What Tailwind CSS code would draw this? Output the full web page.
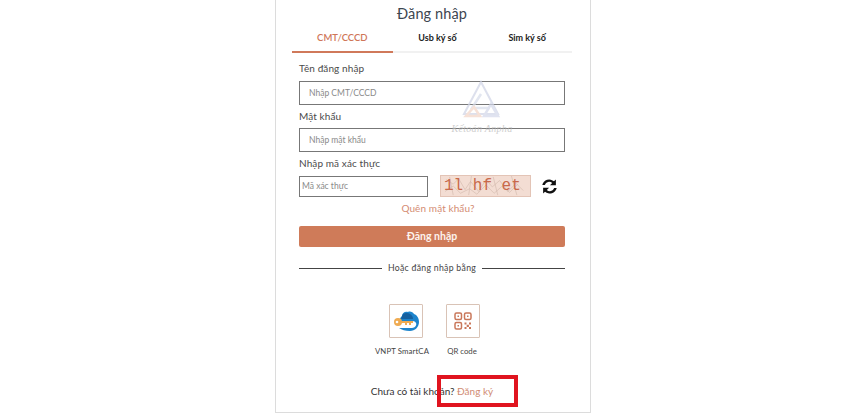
<!doctype html>
<html><head><meta charset="utf-8"><script src="https://cdn.jsdelivr.net/npm/@tailwindcss/browser@4"></script></head>
<body class="bg-white h-[417px] w-[850px] overflow-hidden font-['Lato','Noto_Sans',sans-serif]">
<div class="relative ml-[275px] w-[316px] h-[413px] border-x border-b border-[#dcdcdc] pl-[23px] pr-[25px] text-[#444]">
  <h1 class="h-[29px] pt-[2px] text-center text-[14.5px] leading-[24px] text-[#3d4650] tracking-[.1px]">Đăng nhập</h1>
  <div class="-mx-[7px] flex h-[24px] border-b-2 border-[#f1f1f1] text-[9px] font-bold text-[#222] leading-[18px]">
    <div class="w-[101px] h-[24px] border-b-2 border-[#d0795a] text-center text-[9.5px] font-semibold text-[#cf7657]">CMT/CCCD</div>
    <div class="w-[90px] text-center">Usb ký số</div>
    <div class="w-[90px] text-center">Sim ký số</div>
  </div>
  <div class="mt-[7px] text-[10px] leading-[16px] text-[#4a4a4a] tracking-[.1px]">Tên đăng nhập</div>
  <div class="mt-[5px] h-[24px] border border-[#777] pl-[9px] text-[8.5px] leading-[22px] text-[#8a8a8a]">Nhập CMT/CCCD</div>
  <div class="mt-[3px] text-[10px] leading-[16px] text-[#4a4a4a] tracking-[.1px]">Mật khẩu</div>
  <div class="mt-[4px] h-[24px] border border-[#777] pl-[9px] text-[8.5px] leading-[22px] text-[#8a8a8a]">Nhập mật khẩu</div>
  <div class="mt-[3px] text-[10px] leading-[16px] text-[#4a4a4a] tracking-[.1px]">Nhập mã xác thực</div>
  <div class="mt-[4px] flex items-center h-[22px]">
    <div class="w-[129px] h-[21px] border border-[#777] pl-[2px] text-[8.5px] leading-[19px] text-[#8a8a8a]">Mã xác thực</div>
    <div class="relative ml-[12px] h-[22px] w-[91px] bg-[#f3ddd3] border border-[#e3c4b6]">
      <svg class="absolute inset-0" width="89" height="20" viewBox="0 0 91 22" fill="none" stroke="#cdb3a7" stroke-width=".6"><path d="M2 4l8 5 6-6 7 12 6-9 9 11 8-13 7 8 8-7 9 12 9-9 8 8M1 17l9-6 8 8 10-5 8 6 10-10 9 9 9-8 8 7 9-9M6 1l4 20M30 0l-3 21M54 1l5 20M74 0l6 21"/></svg>
      <div class="relative flex h-full items-center pl-[3px] whitespace-pre font-['Liberation_Mono',monospace] text-[16px] leading-none text-[#c9694a]">1l hf et</div>
    </div>
    <svg class="ml-[10px]" width="17" height="17" viewBox="0 0 24 24" fill="#111"><path d="M21 2v8.4h-8.4l3.2-3.2A6.4 6.4 0 0 0 5.4 9.8H1.8A10 10 0 0 1 18.3 4.7zM3 22v-8.4h8.4l-3.2 3.2a6.4 6.4 0 0 0 10.4-2.6h3.6A10 10 0 0 1 5.7 19.3z"/></svg>
  </div>
  <div class="mt-[3px] pl-[12px] text-center text-[10px] leading-[17px] text-[#d48c72] tracking-[.1px]">Quên mật khẩu?</div>
  <div class="mt-[9px] h-[21px] rounded-[2px] bg-[#cf7b59] text-center text-[10.5px] font-bold leading-[20px] text-[#fdf3ee]">Đăng nhập</div>
  <div class="mt-[14px] flex h-[14px] items-center text-[8.7px] text-[#444] tracking-[.3px]">
    <div class="h-px flex-1 bg-[#444]"></div><span class="px-[6px]">Hoặc đăng nhập bằng</span><div class="h-px flex-1 bg-[#444]"></div>
  </div>
  <div class="mt-[29px] ml-[90px] flex gap-[23px]">
    <div class="size-[34px] flex items-center justify-center border border-[#d9c3b6] rounded-[1px] bg-white">
      <svg width="26" height="22" viewBox="0 0 26 22"><path d="M9 6c0-3 3-5 6-4 2-1 5 0 6 2 3 1 5 4 5 8 0 5-4 9-9 9-5 0-8-1-11-3h13c3 0 5-3 4-5-1-2-3-2-5-2H7C6 9 8 7 9 6z" fill="#1d84cc"/><path d="M9 6c1-3 5-4 8-2 2 1 3 3 3 5H8z" fill="#15609f"/><circle cx="5" cy="12" r="4" fill="#efab52"/><circle cx="4" cy="12" r="1.3" fill="#fff"/><path d="M8 11h12v2h-2v2h-2v-2h-2v2h-2v-2H8z" fill="#efab52"/></svg>
    </div>
    <div class="size-[34px] flex items-center justify-center border border-[#d9c3b6] rounded-[1px]">
      <svg width="18" height="18" viewBox="0 0 18 18" fill="none" stroke="#c9775a" stroke-width="1.5"><rect x="1" y="1" width="6.5" height="6.5" rx="1.5"/><rect x="10.5" y="1" width="6.5" height="6.5" rx="1.5"/><rect x="1" y="10.5" width="6.5" height="6.5" rx="1.5"/><rect x="3.5" y="3.5" width="1.5" height="1.5" fill="#c9775a" stroke="none"/><rect x="13" y="3.5" width="1.5" height="1.5" fill="#c9775a" stroke="none"/><rect x="3.5" y="13" width="1.5" height="1.5" fill="#c9775a" stroke="none"/><path d="M10.5 10.5h2v2h-2zM15 10.5h2v2h-2zM12.7 12.8h2.2v2.2h-2.2zM10.5 15h2v2h-2zM15 15h2v2h-2z" fill="#c9775a" stroke="none"/></svg>
    </div>
  </div>
  <div class="mt-[6px] ml-[65px] flex text-[7.8px] leading-[14px] text-[#444]">
    <div class="w-[76px] text-center tracking-[.1px]">VNPT SmartCA</div><div class="w-[48px] ml-[-2px] text-center">QR code</div>
  </div>
  <div class="mt-[25px] text-center text-[10px] leading-[16px] text-[#333]">Chưa có tài khoản? <span class="text-[#d08b73]">Đăng ký</span></div>

  <div class="absolute left-[161px] top-[375px] h-[32px] w-[81px] border-[4px] border-[#e0141f]"></div>
  <div class="absolute left-[168px] top-[80px] w-[76px] text-center opacity-70">
    <svg class="mx-auto" width="44" height="42" viewBox="0 0 44 42" fill="none" stroke-width="2.5"><path d="M21 2 4 34h34z" stroke="#cfd4e6" stroke-width="2"/><path d="M21 14 12 28h18" stroke="#d7dcea"/><path d="M6 36h14l-6-9z" stroke="#f3d5c7"/><path d="M24 36h14l-7-12z" stroke="#d3d8ea"/></svg>
    <div class="mt-[2px] font-['Liberation_Serif',serif] text-[10px] italic leading-none text-[#b9b9b9] tracking-[.3px] whitespace-nowrap">Kếtoán Anpha</div>
  </div>
</div>
</body></html>
